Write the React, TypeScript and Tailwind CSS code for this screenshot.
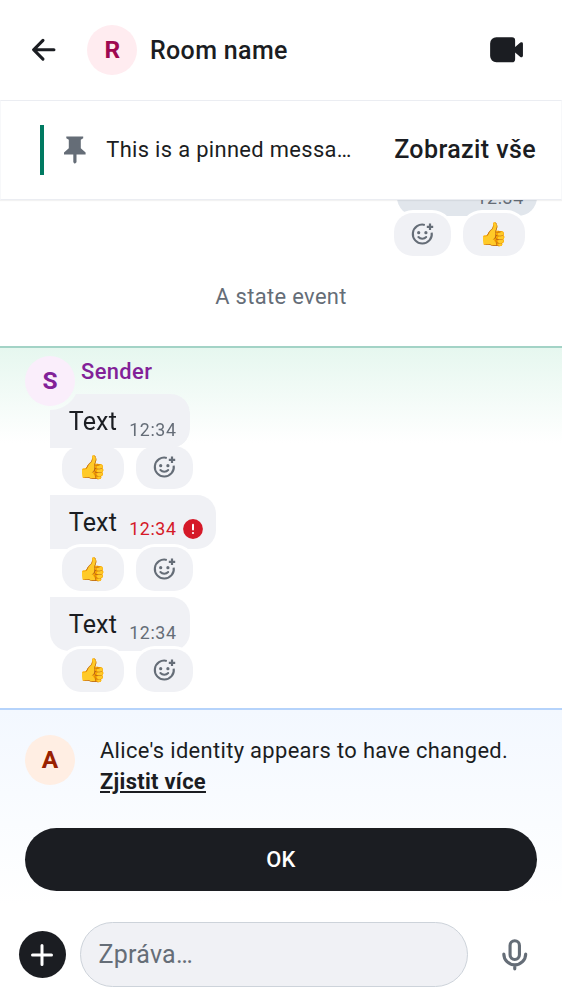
import React from "react";

function AddReactionIcon() {
  return (
    <svg viewBox="0 0 24 24" className="h-6 w-6 text-[#656d77]" fill="none" stroke="currentColor">
      <path d="M14.8 2.9A9.5 9.5 0 1 0 21.7 10.6" strokeWidth="2.1" />
      <path d="M20 1.6v6.4M16.8 4.8h6.4" strokeWidth="2.2" />
      <circle cx="8.7" cy="10.7" r="1.6" fill="currentColor" stroke="none" />
      <circle cx="15.9" cy="10.7" r="1.6" fill="currentColor" stroke="none" />
      <path d="M8.4 15c1 1.1 2.3 1.7 3.9 1.7s2.9-.6 3.9-1.7" strokeWidth="2" strokeLinecap="round" />
    </svg>
  );
}

function ThumbsUp() {
  return (
    <div className="flex h-[43.75px] w-[62px] items-center justify-center rounded-[19px] bg-[#f0f1f5] ring-[3px] ring-white">
      <span className="pt-px font-['Noto_Color_Emoji',sans-serif] text-[23px] leading-none">👍️</span>
    </div>
  );
}

function AddReaction() {
  return (
    <div className="flex h-[43.75px] w-[56.5px] items-center justify-center rounded-[19px] bg-[#f0f1f5] ring-[3px] ring-white">
      <AddReactionIcon />
    </div>
  );
}

function Time({ error = false }: { error?: boolean }) {
  return (
    <span className={`text-[17.8px] leading-[25px] tracking-[0.6px] ${error ? "text-[#d51928]" : "text-[#656d77]"}`}>
      12:34
    </span>
  );
}

function Message({ shape, error = false }: { shape: string; error?: boolean }) {
  return (
    <div className="flex h-[101.5px] flex-col items-start">
      <div className={`ml-[50px] flex h-[54px] shrink-0 bg-[#f0f1f5] pl-[18.75px] ${error ? "w-[166px]" : "w-[140px]"} ${shape}`}>
        <span className="w-[48px] pt-[12px] text-[25px] leading-[31px] tracking-[0.2px] text-[#1b1d22]">Text</span>
        <div className={`ml-[12.5px] flex items-center gap-[6px] self-start ${error ? "pt-[21px]" : "pt-[23px]"}`}>
          <Time error={error} />
          {error && (
            <svg viewBox="0 0 20 20" className="h-5 w-5">
              <circle cx="10" cy="10" r="9.9" fill="#d51928" />
              <path d="M10 5.8v4.6" stroke="white" strokeWidth="2" strokeLinecap="round" />
              <circle cx="10" cy="14" r="1.1" fill="white" />
            </svg>
          )}
        </div>
      </div>
      <div className="-mt-[2px] ml-[62px] flex gap-3">
        <ThumbsUp />
        <AddReaction />
      </div>
    </div>
  );
}

export default function App() {
  return (
    <div className="flex h-[1000px] w-[562px] flex-col overflow-hidden bg-white font-[Roboto,sans-serif] text-[#1b1d22]">
      <header className="flex h-[100px] shrink-0 items-center pr-[37.5px] pl-[25px]">
        <svg viewBox="0 0 24 24" className="h-[37.5px] w-[37.5px]" fill="currentColor">
          <path d="M12.207 5.293a1 1 0 0 1 0 1.414L7.914 11H18.5a1 1 0 1 1 0 2H7.914l4.293 4.293a1 1 0 0 1-1.414 1.414l-6-6a1 1 0 0 1 0-1.414l6-6a1 1 0 0 1 1.414 0" />
        </svg>
        <div className="ml-[24.75px] flex h-[50px] w-[50px] items-center justify-center rounded-full bg-[#ffecf0] pt-px text-[24.5px] font-bold text-[#9f0850]">
          R
        </div>
        <h1 className="ml-[12.75px] flex-1 pt-px text-[25px] font-medium tracking-[0.35px]">Room name</h1>
        <svg viewBox="0 0 24 24" className="h-[37.5px] w-[37.5px]" fill="currentColor">
          <path d="M6 4h10a2 2 0 0 1 2 2v4.286l3.35-2.871a1 1 0 0 1 1.65.76v7.65a1 1 0 0 1-1.65.76L18 13.714V18a2 2 0 0 1-2 2H6a4 4 0 0 1-4-4V8a4 4 0 0 1 4-4" />
        </svg>
      </header>

      <section className="z-10 flex h-[100px] shrink-0 items-center border border-[#ebedf2] border-x-[#f7f8fa] bg-white pr-[25px] pl-[39.25px] shadow-[0_1px_1px_rgba(0,0,0,0.05)]">
        <div className="h-[50px] w-[3.75px] bg-[#007a61]" />
        <svg viewBox="0 0 24 30" className="ml-[19px] h-[30px] w-6 text-[#656d77]" fill="currentColor">
          <path d="M3.3 1.5h16.9v1.8l-2.4 1.5v8.4l4.8 4.4v2h-9.1v7.7l-1.7 1.4-1.5-1.4v-7.7H1v-2l4.8-4.4V4.8L3.3 3.3z" />
        </svg>
        <p className="ml-[19.25px] flex-1 pt-px text-[21.9px] whitespace-nowrap tracking-[0.34px]">This is a pinned messa…</p>
        <button className="text-[25px] font-medium whitespace-nowrap tracking-[0.4px]">Zobrazit vše</button>
      </section>

      <main className="flex h-[508px] shrink-0 flex-col overflow-hidden">
        <div className="-mt-[38.5px] flex h-[54px] shrink-0 justify-end pr-[25px]">
          <div className="flex w-[140px] rounded-[19px] bg-[#e1e6ec] pt-[23px] pl-[79.5px]">
            <Time />
          </div>
        </div>
        <div className="-mt-[3px] flex shrink-0 justify-end gap-3 pr-[37.5px]">
          <AddReaction />
          <ThumbsUp />
        </div>
        <p className="mt-[25px] h-[31px] shrink-0 text-center text-[21.9px] leading-[31px] tracking-[0.35px] text-[#656d77]">
          A state event
        </p>
        <section className="mt-[33.75px] flex shrink-0 flex-col border-t-2 border-[#a3d3c6] bg-linear-to-b from-[#e6f7ef] to-white to-[95px]">
          <div className="flex h-[45.5px] shrink-0 pl-[25px]">
            <div className="mt-2 flex h-[50px] w-[50px] shrink-0 items-center justify-center rounded-full bg-[#faeefb] pt-px text-[24.5px] font-bold text-[#822198]">
              S
            </div>
            <span className="ml-[6px] pt-[8px] text-[21.9px] leading-[31px] font-medium tracking-[0.38px] text-[#822198]">Sender</span>
          </div>
          <Message shape="rounded-r-[19px] mask-[radial-gradient(circle_at_0px_-13px,transparent_28.5px,black_29.5px)]" />
          <Message shape="rounded-r-[19px]" error />
          <Message shape="rounded-r-[19px] rounded-bl-[19px]" />
        </section>
      </main>

      <section className="flex h-[198px] shrink-0 flex-col border-t-2 border-[#b5d3fb] bg-linear-to-b from-[#f3f8ff] to-white px-[25px] pt-[24.5px]">
        <div className="flex h-[93.5px] shrink-0 gap-[25px]">
          <div className="flex h-[50px] w-[50px] shrink-0 items-center justify-center rounded-full bg-[#ffeee3] pt-px text-[24.5px] font-bold text-[#992100]">
            A
          </div>
          <p className="text-[21.9px] leading-[31.25px] tracking-[0.34px]">
            Alice's identity appears to have changed.
            <br />
            <a className="font-bold tracking-[0.3px] underline">Zjistit více</a>
          </p>
        </div>
        <button className="h-[62.5px] shrink-0 rounded-full bg-[#1b1d22] pt-[2px] text-[21.9px] font-medium tracking-[0.2px] text-white">OK</button>
      </section>

      <footer className="flex h-[94px] shrink-0 items-center pt-[3px] pl-[18.75px]">
        <button className="flex h-[47px] w-[47px] items-center justify-center rounded-full bg-[#1b1d22]">
          <svg viewBox="0 0 24 24" className="h-6 w-6" fill="none" stroke="white" strokeWidth="3" strokeLinecap="round">
            <path d="M12 2.5v19M2.5 12h19" />
          </svg>
        </button>
        <div className="ml-[14px] flex h-[65.5px] w-[388.5px] items-center rounded-[33px] border border-[#cdd3da] bg-[#f0f1f5] pt-px pl-[17.75px] text-[25px] tracking-[0.25px] text-[#656d77]">
          Zpráva…
        </div>
        <svg viewBox="0 0 24 24" className="ml-[28px] h-[37.5px] w-[37.5px] text-[#656d77]" fill="none" stroke="currentColor" strokeWidth="2">
          <rect x="9" y="3" width="6" height="12" rx="3" />
          <path d="M5 11.5a7 7 0 0 0 14 0M12 18.5V21" strokeLinecap="round" />
        </svg>
      </footer>
    </div>
  );
}
